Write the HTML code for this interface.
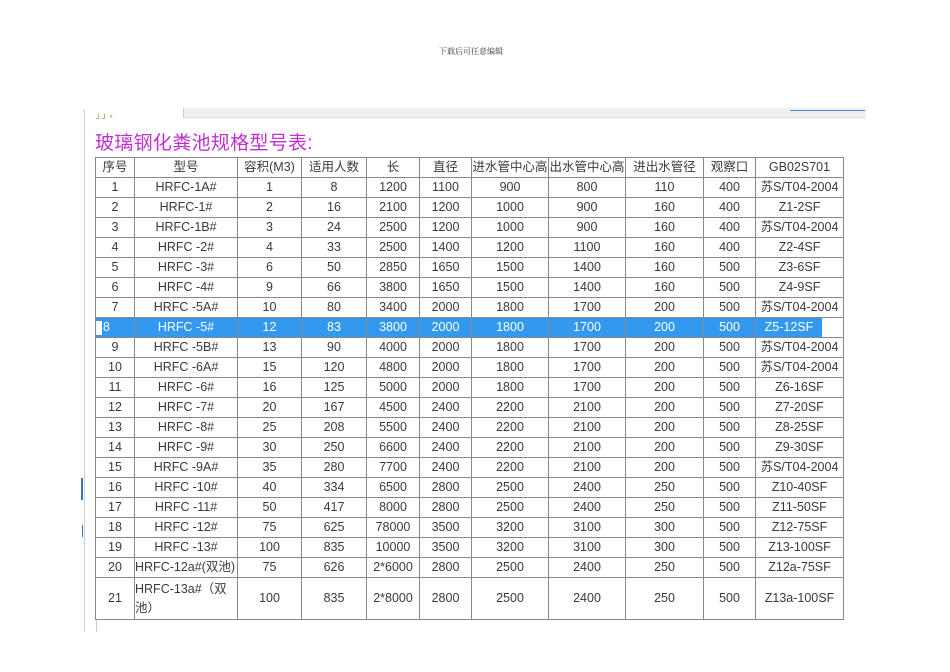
<!DOCTYPE html>
<html><head><meta charset="utf-8"><style>
body{margin:0;width:950px;height:672px;background:#fff;position:relative;overflow:hidden;font-family:"Liberation Sans","Noto Sans CJK SC",sans-serif;}
.hdr{position:absolute;left:439px;top:46px;font-family:"Liberation Serif","Noto Serif CJK SC",serif;font-size:8px;color:#333;}
.bar{position:absolute;left:183px;top:108px;width:682px;height:9px;background:#f0f0f0;border-bottom:1px solid #ddd;border-left:1px solid #ccc;}
.blu{position:absolute;left:790px;top:110px;width:75px;height:1px;background:#4a8fd4;}
.vl{position:absolute;left:84px;top:110px;width:1px;height:522px;background:#ccc;}
.vl2{position:absolute;left:96px;top:620px;width:1px;height:12px;background:#ccc;}
.mk{position:absolute;left:81px;width:2px;background:#3a6fb0;}
.title{position:absolute;left:95px;top:128px;font-size:19px;color:#c030d0;letter-spacing:0.3px;}
.small{position:absolute;left:96px;top:114px;font-size:8px;color:#a08030;}
table{position:absolute;left:95px;top:157px;border-collapse:collapse;table-layout:fixed;font-size:12.5px;color:#3a3a3a;}
td{border:1px solid #888;height:19px;padding:0;text-align:center;white-space:nowrap;overflow:hidden;line-height:19px;}
tr.hl td{background:#3399ee;color:#fff;}
tr.hl td.last{background:#fff;text-align:left;}
tr.hl td.last span{background:#3399ee;color:#fff;display:inline-block;width:66px;text-align:center;}
tr.hl td.first{text-align:left;}
tr.hl td.first i{display:inline-block;width:6px;height:14px;background:#fff;vertical-align:middle;margin-right:1px;}
.l{text-align:left;}
</style></head><body>
<div class="hdr">下载后可任意编辑</div>
<div class="bar"></div><div class="blu"></div>
<div class="vl"></div><div class="vl2"></div>
<div class="mk" style="top:478px;height:22px"></div>
<div class="mk" style="top:525px;height:12px;left:82px;width:1px"></div>
<div class="small">┘┘ °</div>
<div class="title">玻璃钢化粪池规格型号表:</div>
<table>
<colgroup><col style="width:39px"><col style="width:103px"><col style="width:64px"><col style="width:65px"><col style="width:53px"><col style="width:52px"><col style="width:77px"><col style="width:77px"><col style="width:78px"><col style="width:52px"><col style="width:88px"></colgroup>
<tr><td>序号</td><td>型号</td><td>容积(M3)</td><td>适用人数</td><td>长</td><td>直径</td><td>进水管中心高</td><td>出水管中心高</td><td>进出水管径</td><td>观察口</td><td>GB02S701</td></tr>
<tr><td>1</td><td>HRFC-1A#</td><td>1</td><td>8</td><td>1200</td><td>1100</td><td>900</td><td>800</td><td>110</td><td>400</td><td>苏S/T04-2004</td></tr>
<tr><td>2</td><td>HRFC-1#</td><td>2</td><td>16</td><td>2100</td><td>1200</td><td>1000</td><td>900</td><td>160</td><td>400</td><td>Z1-2SF</td></tr>
<tr><td>3</td><td>HRFC-1B#</td><td>3</td><td>24</td><td>2500</td><td>1200</td><td>1000</td><td>900</td><td>160</td><td>400</td><td>苏S/T04-2004</td></tr>
<tr><td>4</td><td>HRFC -2#</td><td>4</td><td>33</td><td>2500</td><td>1400</td><td>1200</td><td>1100</td><td>160</td><td>400</td><td>Z2-4SF</td></tr>
<tr><td>5</td><td>HRFC -3#</td><td>6</td><td>50</td><td>2850</td><td>1650</td><td>1500</td><td>1400</td><td>160</td><td>500</td><td>Z3-6SF</td></tr>
<tr><td>6</td><td>HRFC -4#</td><td>9</td><td>66</td><td>3800</td><td>1650</td><td>1500</td><td>1400</td><td>160</td><td>500</td><td>Z4-9SF</td></tr>
<tr><td>7</td><td>HRFC -5A#</td><td>10</td><td>80</td><td>3400</td><td>2000</td><td>1800</td><td>1700</td><td>200</td><td>500</td><td>苏S/T04-2004</td></tr>
<tr class="hl"><td class="first"><i></i>8</td><td>HRFC -5#</td><td>12</td><td>83</td><td>3800</td><td>2000</td><td>1800</td><td>1700</td><td>200</td><td>500</td><td class="last"><span>Z5-12SF</span></td></tr>
<tr><td>9</td><td>HRFC -5B#</td><td>13</td><td>90</td><td>4000</td><td>2000</td><td>1800</td><td>1700</td><td>200</td><td>500</td><td>苏S/T04-2004</td></tr>
<tr><td>10</td><td>HRFC -6A#</td><td>15</td><td>120</td><td>4800</td><td>2000</td><td>1800</td><td>1700</td><td>200</td><td>500</td><td>苏S/T04-2004</td></tr>
<tr><td>11</td><td>HRFC -6#</td><td>16</td><td>125</td><td>5000</td><td>2000</td><td>1800</td><td>1700</td><td>200</td><td>500</td><td>Z6-16SF</td></tr>
<tr><td>12</td><td>HRFC -7#</td><td>20</td><td>167</td><td>4500</td><td>2400</td><td>2200</td><td>2100</td><td>200</td><td>500</td><td>Z7-20SF</td></tr>
<tr><td>13</td><td>HRFC -8#</td><td>25</td><td>208</td><td>5500</td><td>2400</td><td>2200</td><td>2100</td><td>200</td><td>500</td><td>Z8-25SF</td></tr>
<tr><td>14</td><td>HRFC -9#</td><td>30</td><td>250</td><td>6600</td><td>2400</td><td>2200</td><td>2100</td><td>200</td><td>500</td><td>Z9-30SF</td></tr>
<tr><td>15</td><td>HRFC -9A#</td><td>35</td><td>280</td><td>7700</td><td>2400</td><td>2200</td><td>2100</td><td>200</td><td>500</td><td>苏S/T04-2004</td></tr>
<tr><td>16</td><td>HRFC -10#</td><td>40</td><td>334</td><td>6500</td><td>2800</td><td>2500</td><td>2400</td><td>250</td><td>500</td><td>Z10-40SF</td></tr>
<tr><td>17</td><td>HRFC -11#</td><td>50</td><td>417</td><td>8000</td><td>2800</td><td>2500</td><td>2400</td><td>250</td><td>500</td><td>Z11-50SF</td></tr>
<tr><td>18</td><td>HRFC -12#</td><td>75</td><td>625</td><td>78000</td><td>3500</td><td>3200</td><td>3100</td><td>300</td><td>500</td><td>Z12-75SF</td></tr>
<tr><td>19</td><td>HRFC -13#</td><td>100</td><td>835</td><td>10000</td><td>3500</td><td>3200</td><td>3100</td><td>300</td><td>500</td><td>Z13-100SF</td></tr>
<tr><td>20</td><td class="l">HRFC-12a#(双池)</td><td>75</td><td>626</td><td>2*6000</td><td>2800</td><td>2500</td><td>2400</td><td>250</td><td>500</td><td>Z12a-75SF</td></tr>
<tr><td style="height:41px">21</td><td class="l" style="white-space:normal;line-height:19px">HRFC-13a#（双池）</td><td>100</td><td>835</td><td>2*8000</td><td>2800</td><td>2500</td><td>2400</td><td>250</td><td>500</td><td>Z13a-100SF</td></tr>
</table>
</body></html>
